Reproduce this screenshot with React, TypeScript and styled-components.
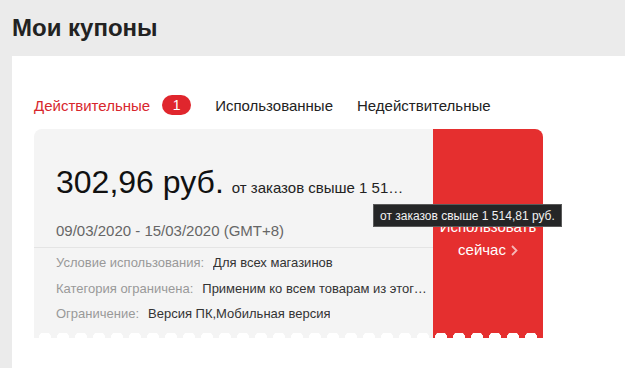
import styled, { createGlobalStyle } from 'styled-components';

const GlobalStyle = createGlobalStyle`
  html, body {
    margin: 0;
    padding: 0;
    background: #ebebeb;
    font-family: "Liberation Sans", Arial, sans-serif;
    overflow: hidden;
  }
`;

const Page = styled.div`
  width: 625px;
  height: 368px;
  display: flex;
  flex-direction: column;
`;

const Header = styled.h1`
  margin: 0;
  height: 56px;
  padding: 0 12px;
  display: flex;
  align-items: center;
  font-size: 24px;
  font-weight: bold;
  color: #222;
`;

const Panel = styled.div`
  flex: 1;
  margin-left: 12px;
  background: #fff;
  padding: 39px 22px 0;
`;

const Tabs = styled.div`
  display: flex;
  align-items: center;
  gap: 24px;
  height: 20px;
  margin-bottom: 14px;
`;

const Tab = styled.div<{ $active?: boolean }>`
  display: flex;
  align-items: center;
  gap: 12px;
  font-size: 15px;
  color: ${(p) => (p.$active ? '#d8262d' : '#222')};
`;

const Badge = styled.span`
  display: inline-flex;
  align-items: center;
  justify-content: center;
  width: 29px;
  height: 20px;
  border-radius: 10px;
  background: #e0262d;
  color: #fff;
  font-size: 14px;
`;

const Card = styled.div`
  position: relative;
  width: 509px;
  height: 209px;
  display: flex;
  &::after {
    content: '';
    position: absolute;
    left: 0;
    right: 0;
    bottom: 0;
    height: 5px;
    background: radial-gradient(circle at 50% 100%, #fff 6px, transparent 6.5px) 2px 0 / 18px 5px repeat-x;
  }
`;

const Body = styled.div`
  width: 399px;
  background: #f4f4f4;
  border-top-left-radius: 8px;
  padding-top: 33px;
  box-sizing: border-box;
`;

const PriceRow = styled.div`
  display: flex;
  align-items: baseline;
  padding: 0 24px 0 22px;
  line-height: 40px;
  height: 40px;
`;

const Price = styled.span`
  font-size: 32px;
  color: #111;
  white-space: nowrap;
  margin-right: 8px;
`;

const Threshold = styled.span`
  flex: 1;
  min-width: 0;
  font-size: 15px;
  color: #222;
  white-space: nowrap;
  overflow: hidden;
  text-overflow: ellipsis;
`;

const Dates = styled.div`
  margin-top: 19px;
  padding: 0 22px 6px;
  font-size: 15px;
  line-height: 20px;
  color: #666;
  border-bottom: 1px solid #e4e4e4;
`;

const Rows = styled.div`
  padding: 2px 6px 0 22px;
`;

const Row = styled.div`
  display: flex;
  gap: 9px;
  font-size: 13px;
  line-height: 25.5px;
  white-space: nowrap;
`;

const Label = styled.span`
  color: #999;
`;

const Value = styled.span`
  color: #333;
  min-width: 0;
  overflow: hidden;
  text-overflow: ellipsis;
`;

const Action = styled.div`
  flex: 1;
  background: #e52f2f;
  border-top-right-radius: 8px;
  display: flex;
  flex-direction: column;
  align-items: center;
  justify-content: center;
  padding-top: 8px;
  color: #fff;
  font-size: 15px;
  line-height: 23px;
  text-align: center;
`;

const Chevron = styled.svg`
  width: 7px;
  height: 11px;
  margin-left: 5px;
  vertical-align: -1px;
`;

const Tooltip = styled.div`
  position: absolute;
  left: 339px;
  top: 75px;
  height: 23px;
  padding: 0 6px;
  display: flex;
  align-items: center;
  background: #252627;
  border: 1px solid #5a5a5a;
  box-sizing: border-box;
  color: #f2f2f2;
  font-size: 12px;
  white-space: nowrap;
  z-index: 2;
`;

export default function App() {
  return (
    <Page>
      <GlobalStyle />
      <Header>Мои купоны</Header>
      <Panel>
        <Tabs>
          <Tab $active>
            Действительные <Badge>1</Badge>
          </Tab>
          <Tab>Использованные</Tab>
          <Tab>Недействительные</Tab>
        </Tabs>
        <Card>
          <Body>
            <PriceRow>
              <Price>302,96 руб.</Price>
              <Threshold>от заказов свыше 1 514,81 руб.</Threshold>
            </PriceRow>
            <Dates>09/03/2020 - 15/03/2020 (GMT+8)</Dates>
            <Rows>
              <Row>
                <Label>Условие использования:</Label>
                <Value>Для всех магазинов</Value>
              </Row>
              <Row>
                <Label>Категория ограничена:</Label>
                <Value>Применим ко всем товарам из этого магазина</Value>
              </Row>
              <Row>
                <Label>Ограничение:</Label>
                <Value>Версия ПК,Мобильная версия</Value>
              </Row>
            </Rows>
          </Body>
          <Action>
            <div>Использовать</div>
            <div>
              сейчас
              <Chevron viewBox="0 0 7 11">
                <polyline points="1,1 5.5,5.5 1,10" fill="none" stroke="rgba(255,255,255,0.65)" strokeWidth="1.8" />
              </Chevron>
            </div>
          </Action>
          <Tooltip>от заказов свыше 1 514,81 руб.</Tooltip>
        </Card>
      </Panel>
    </Page>
  );
}
